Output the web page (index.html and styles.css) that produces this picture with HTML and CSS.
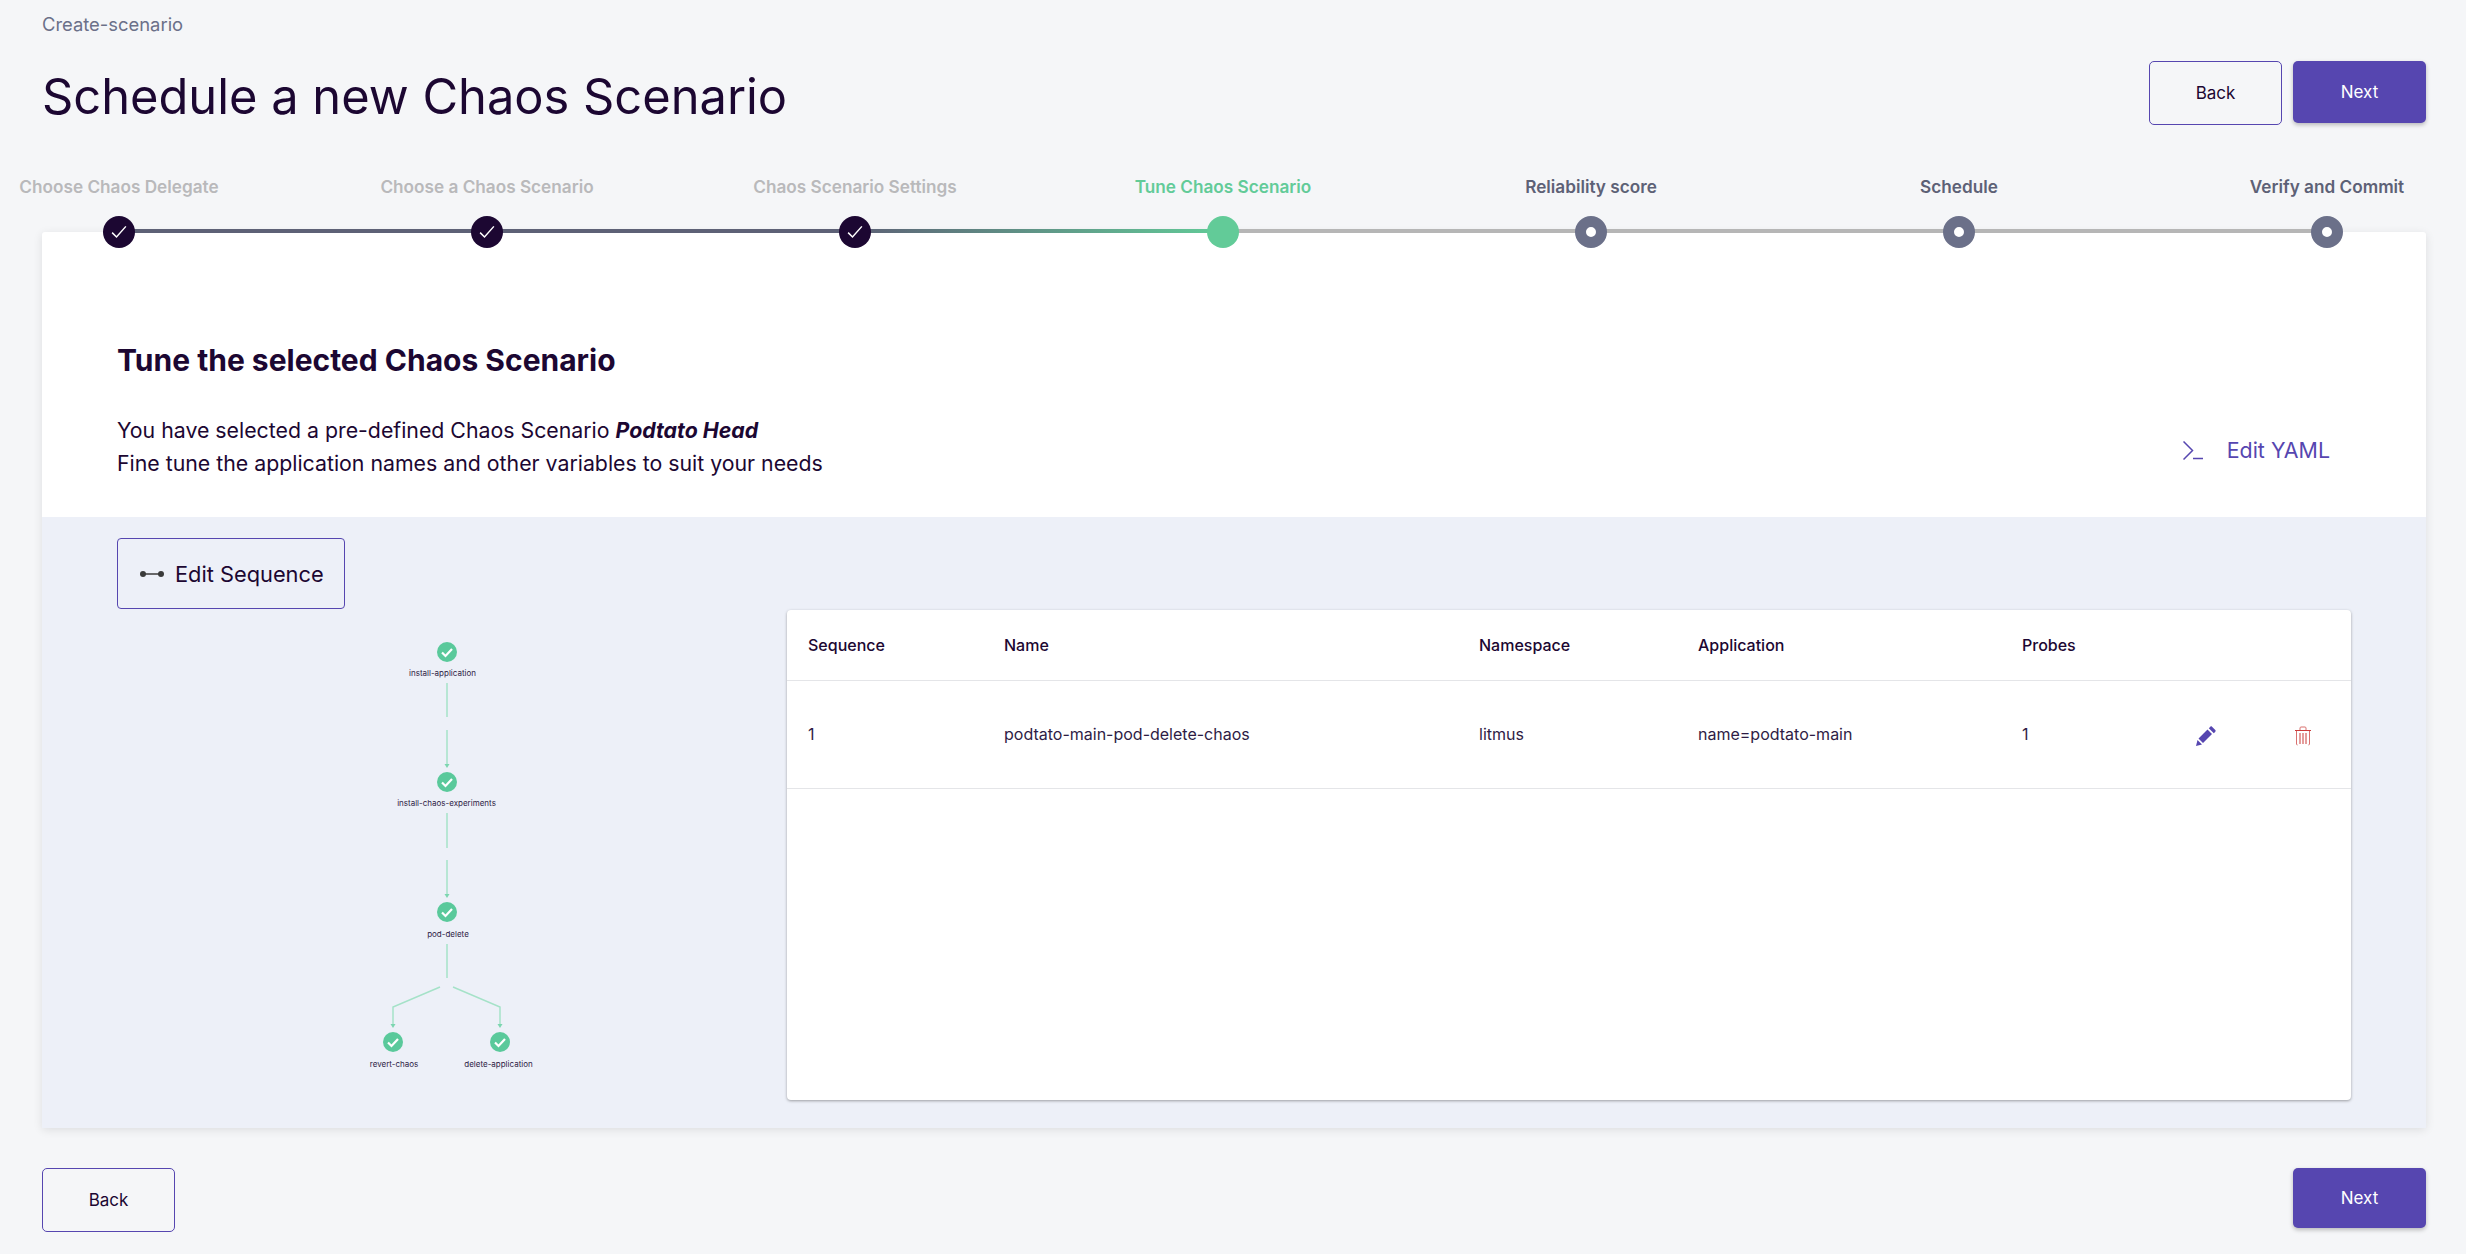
FILE: index.html
```html
<!DOCTYPE html>
<html lang="en">
<head>
  <meta charset="UTF-8" />
  <meta name="viewport" content="width=device-width, initial-scale=1" />
  <title>Create-scenario</title>
  <link rel="stylesheet" href="styles.css">
</head>
<body>
  <div class="breadcrumb">Create-scenario</div>

  <section class="page-header">
    <h1 class="page-title">Schedule a new Chaos Scenario</h1>
    <div class="btn-row">
      <button class="btn btn-outline">Back</button>
      <button class="btn btn-fill">Next</button>
    </div>
  </section>

  <!-- STEPPER -->
  <ol class="stepper">
    <li class="step done line-done"><span class="step-label">Choose Chaos Delegate</span>
      <span class="step-dot"><svg width="20" height="20" viewBox="0 0 16 16"><path d="M2.500 8.500l3.500 3.500L13.500 3.500" fill="none" stroke="#fff" stroke-width="1.200"/></svg></span></li>
    <li class="step done line-done"><span class="step-label">Choose a Chaos Scenario</span>
      <span class="step-dot"><svg width="20" height="20" viewBox="0 0 16 16"><path d="M2.500 8.500l3.500 3.500L13.500 3.500" fill="none" stroke="#fff" stroke-width="1.200"/></svg></span></li>
    <li class="step done line-active"><span class="step-label">Chaos Scenario Settings</span>
      <span class="step-dot"><svg width="20" height="20" viewBox="0 0 16 16"><path d="M2.500 8.500l3.500 3.500L13.500 3.500" fill="none" stroke="#fff" stroke-width="1.200"/></svg></span></li>
    <li class="step active"><span class="step-label">Tune Chaos Scenario</span><span class="step-dot"></span></li>
    <li class="step todo"><span class="step-label">Reliability score</span><span class="step-dot"></span></li>
    <li class="step todo"><span class="step-label">Schedule</span><span class="step-dot"></span></li>
    <li class="step todo last"><span class="step-label">Verify and Commit</span><span class="step-dot"></span></li>
  </ol>

  <!-- CARD -->
  <main class="card">
    <div class="card-top">
      <h2 class="card-title">Tune the selected Chaos Scenario</h2>
      <div class="intro">
        <p class="intro-text">You have selected a pre-defined Chaos Scenario <strong>Podtato Head</strong><br>Fine tune the application names and other variables to suit your needs</p>
        <button class="edit-yaml">
          <svg width="20" height="19" viewBox="0 0 20 19"><path d="M.5.500l9 9-9 9M10 17.500h10" fill="none" stroke="#5646b0" stroke-width="1.500"/></svg>
          Edit YAML
        </button>
      </div>
    </div>

    <div class="card-bottom">
      <div class="graph-col">
        <button class="edit-seq">
          <svg width="24" height="8" viewBox="0 0 24 8"><circle cx="3" cy="4" r="3" fill="#3a3a3a"/><circle cx="21" cy="4" r="3" fill="#3a3a3a"/><path d="M3 4h18" stroke="#3a3a3a" stroke-width="1.500"/></svg>
          Edit Sequence
        </button>
        <svg class="graph" width="250" height="470" viewBox="0 0 250 470">
          <defs>
            <g id="node">
              <circle r="10" fill="#5ac99b"/>
              <path d="M-5 .5l3.500 3.500L5-3" fill="none" stroke="#fff" stroke-width="2.200"/>
            </g>
          </defs>
          <g class="edge">
            <path d="M125 71v34M125 118v34M125 201v35M125 248v34M125 332v34M118 375L71 395v17M131 375L178 395v17"/>
          </g>
          <g class="arrow">
            <path d="M122.500 152h5l-2.500 4zM122.500 282h5l-2.500 4zM68.500 412h5l-2.500 4zM175.500 412h5l-2.500 4z"/>
          </g>
          <use href="#node" x="125" y="40"/>
          <text x="120.500" y="64">install-application</text>
          <use href="#node" x="125" y="170"/>
          <text x="124.500" y="194">install-chaos-experiments</text>
          <use href="#node" x="125" y="300"/>
          <text x="126" y="325">pod-delete</text>
          <use href="#node" x="71" y="430"/>
          <text x="72" y="455">revert-chaos</text>
          <use href="#node" x="178" y="430"/>
          <text x="176.500" y="455">delete-application</text>
        </svg>
      </div>

      <div class="table-card">
        <table class="seq-table">
          <thead>
            <tr>
              <th class="col-seq">Sequence</th>
              <th class="col-name">Name</th>
              <th class="col-ns">Namespace</th>
              <th class="col-app">Application</th>
              <th class="col-probes">Probes</th>
              <th class="col-edit"></th>
              <th></th>
            </tr>
          </thead>
          <tbody>
            <tr>
              <td>1</td>
              <td>podtato-main-pod-delete-chaos</td>
              <td>litmus</td>
              <td>name=podtato-main</td>
              <td class="probe-count">1</td>
              <td class="icon-td"><svg class="icon-cell" width="20" height="20" viewBox="0 0 20 20"><path d="M0 20l1.500-6 4.500 4.500zM2.500 12.500l9-9 4.500 4.500-9 9zM12.800 2.200l1.500-1.500c.6-.5 1.200-.5 1.700 0l3.300 3.300c.5.500.5 1.100 0 1.700L17.800 7.200z" fill="#5646b0"/></svg></td>
              <td class="icon-td"><svg class="icon-cell" width="18" height="20" viewBox="0 0 18 20"><path d="M6 4V2c0-.6.400-1 1-1h4c.6 0 1 .400 1 1v2M2.500 4.500V18c0 .6.400 1 1 1M15.500 4.500V18c0 .6-.4 1-1 1" fill="none" stroke="#d9706f" stroke-width="1"/><path d="M1 4.500h16M6 7v11M9 7v11M12 7v11" fill="none" stroke="#ca3c3b" stroke-width="1"/></svg></td>
            </tr>
          </tbody>
        </table>
      </div>
    </div>
  </main>

  <footer class="page-footer">
    <button class="btn btn-outline">Back</button>
    <button class="btn btn-fill btn-short">Next</button>
  </footer>
</body>
</html>
```

FILE: styles.css
```css
body {
  margin: 0;
  height: 1254px;
  overflow: hidden;
  font-family: Inter, "Noto Sans", sans-serif;
  background-color: #f5f6f8;
  color: #1c0732;
}

button {
  font-family: inherit;
  cursor: pointer;
}

.breadcrumb {
  padding: 14px 42px 0;
  height: 20px;
  line-height: 20px;
  font-size: 18.400px;
  color: #6b7089;
}

.page-header {
  display: flex;
  align-items: flex-start;
  justify-content: space-between;
  padding: 27px 40px 0 42px;
  height: 114px;
}

.page-title {
  margin: 1px 0 0;
  font-size: 48.800px;
  line-height: 70px;
  font-weight: 400;
}

.btn-row {
  display: flex;
  align-items: flex-start;
  gap: 11px;
}

.btn {
  box-sizing: border-box;
  width: 133px;
  height: 62px;
  border-radius: 5px;
  font-size: 17px;
}

.btn-outline {
  height: 64px;
  background: transparent;
  border: 1px solid #5646b0;
  color: #1c0732;
}

.btn-fill {
  background-color: #5646b0;
  border: none;
  color: white;
  box-shadow: 0 2px 4px rgba(0,0,0,0.25);
}

.btn-short {
  height: 60px;
}

/* stepper */
.stepper {
  display: flex;
  list-style: none;
  margin: 0 0 -16px -65px;
  padding: 2px 0 0;
  position: relative;
  z-index: 1;
}

.step {
  position: relative;
  width: 368px;
  flex: none;
  display: flex;
  flex-direction: column;
  align-items: center;
  gap: 19px;
}

.step::after {
  content: "";
  position: absolute;
  left: 50%;
  width: 100%;
  bottom: 15px;
  height: 4px;
  background-color: #b6b6b6;
}

.step.last::after {
  display: none;
}

.step.line-done::after {
  background-color: #5d6176;
}

.step.line-active::after {
  background: linear-gradient(to right, #5d6176, #62cb98);
}

.step-label {
  font-size: 17.200px;
  line-height: 20px;
  font-weight: 600;
}

.step-dot {
  position: relative;
  z-index: 1;
  box-sizing: border-box;
  width: 32px;
  height: 32px;
  border-radius: 50%;
  display: flex;
  align-items: center;
  justify-content: center;
}

.done .step-label {
  color: #b9b9bb;
}

.done .step-dot {
  background-color: #1c0732;
}

.active .step-label {
  color: #62cb98;
}

.active .step-dot {
  background-color: #62cb98;
}

.todo .step-label {
  color: #5d6176;
}

.todo .step-dot {
  background-color: white;
  border: 11px solid #6b7089;
}

/* card */
.card {
  margin: 0 40px 0 42px;
  height: 896px;
  display: flex;
  flex-direction: column;
  background: white;
  border-radius: 3px;
  box-shadow: 0 2px 10px rgba(0,0,0,0.1);
}

.card-top {
  height: 285px;
  box-sizing: border-box;
  padding: 108px 96px 0 75px;
}

.card-title {
  margin: 0 0 34px;
  font-size: 30px;
  line-height: 40px;
  font-weight: 700;
}

.intro {
  display: flex;
  align-items: center;
  justify-content: space-between;
}

.intro-text {
  margin: 0;
  font-size: 21.300px;
  line-height: 33px;
}

.intro-text strong {
  font-weight: 700;
  font-style: italic;
}

.edit-yaml {
  display: flex;
  align-items: center;
  gap: 24px;
  margin-top: 6px;
  padding: 0;
  background: none;
  border: none;
  font-size: 21.400px;
  color: #5646b0;
}

.card-bottom {
  flex: 1;
  display: flex;
  background-color: #edf0f8;
  padding: 21px 75px 28px;
}

.graph-col {
  width: 670px;
  flex: none;
}

.edit-seq {
  display: flex;
  align-items: center;
  gap: 11px;
  box-sizing: border-box;
  width: 228px;
  height: 71px;
  padding: 0 0 0 22px;
  background: none;
  border: 1px solid #5646b0;
  border-radius: 4px;
  font-size: 21.800px;
  color: #1c0732;
}

.graph {
  display: block;
  margin: 3px 0 0 205px;
  overflow: visible;
}

.graph text {
  font-size: 8px;
  text-anchor: middle;
  fill: #2e1c45;
}

.edge path {
  fill: none;
  stroke: #a5e2c8;
  stroke-width: 1.500;
}

.arrow path {
  fill: #7cd6b0;
}

.table-card {
  flex: 1;
  margin-top: 72px;
  background: white;
  border-radius: 4px;
  box-shadow: 0 1px 3px rgba(0,0,0,0.35);
}

.seq-table {
  width: 100%;
  border-collapse: collapse;
  font-size: 16px;
}

.seq-table th,
.seq-table td {
  box-sizing: border-box;
  padding: 0 0 0 21px;
  text-align: left;
  border-bottom: 1px solid #e4e5e8;
}

.seq-table th {
  height: 70px;
  font-weight: 500;
}

.seq-table td {
  height: 108px;
  color: #2e1c45;
}

.col-seq { width: 196px; }
.col-name { width: 475px; }
.col-ns { width: 219px; }
.col-app { width: 324px; }
.col-probes { width: 174px; }
.col-edit { width: 98px; }

.probe-count {
  color: #3b2a86;
}

.seq-table .icon-td {
  padding-top: 4px;
}

.icon-cell {
  display: block;
}

.page-footer {
  display: flex;
  justify-content: space-between;
  align-items: flex-start;
  padding: 40px 40px 0 42px;
}
```
